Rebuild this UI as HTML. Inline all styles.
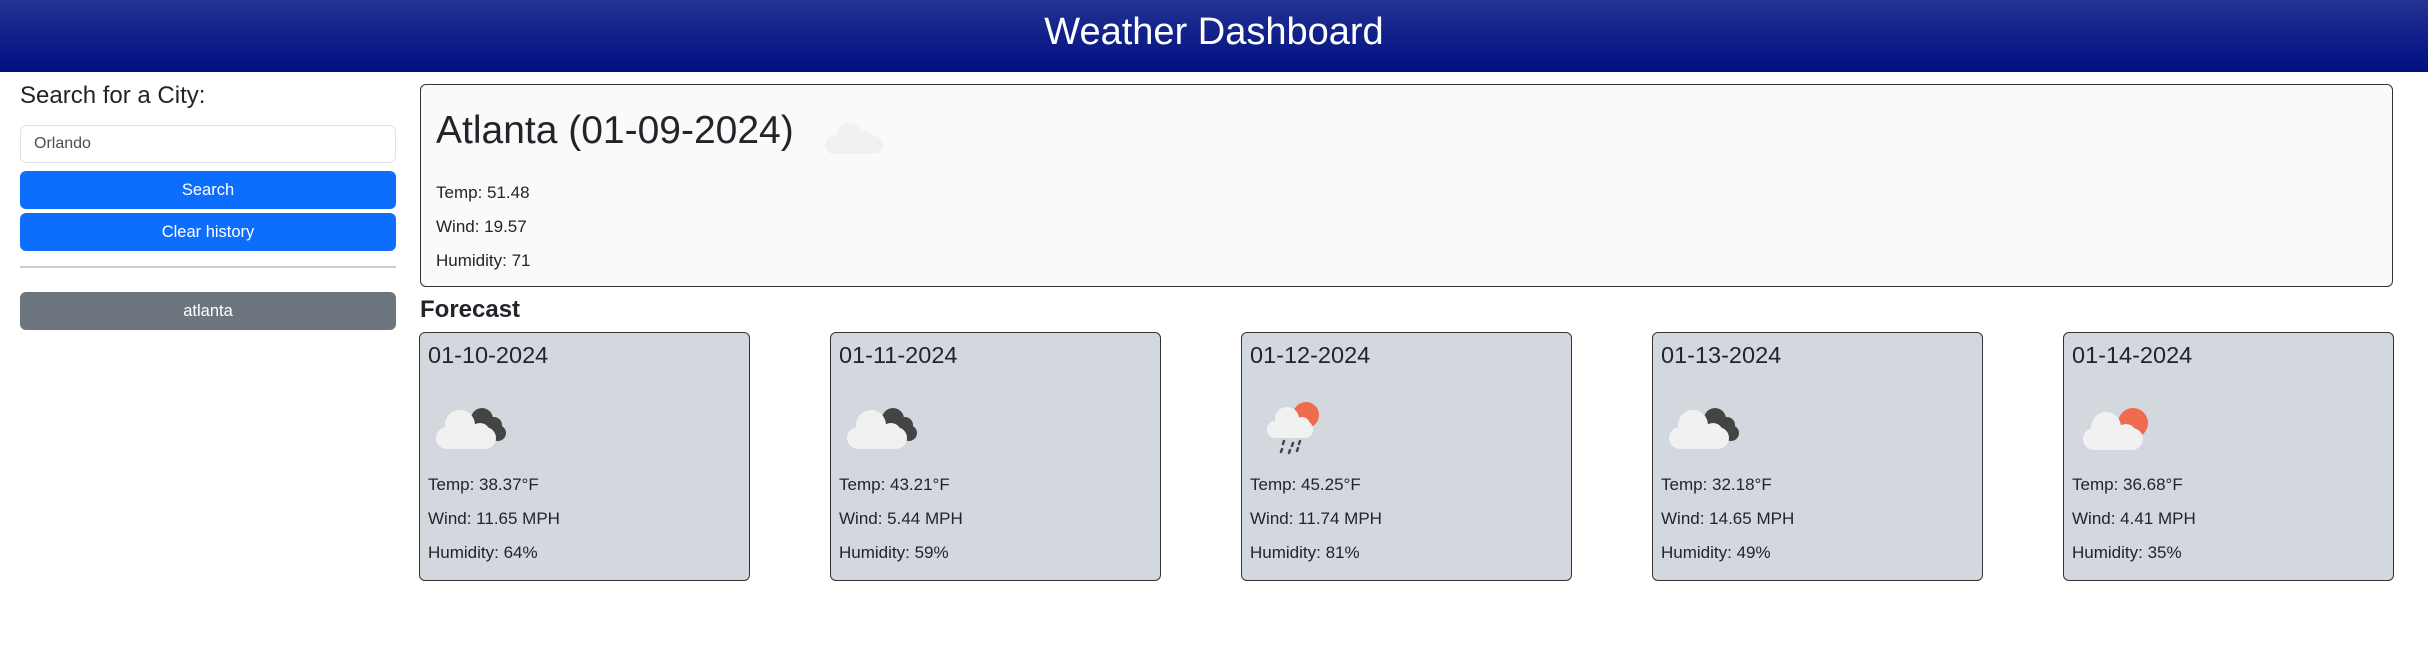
<!DOCTYPE html>
<html><head><meta charset="utf-8"><style>
*{box-sizing:border-box;margin:0;padding:0}
body{width:2428px;height:646px;background:#fff;font-family:"Liberation Sans",Arial,sans-serif;color:#212529;position:relative;overflow:hidden}
.hdr{position:absolute;left:0;top:0;width:2428px;height:72px;background:linear-gradient(#233293,#000f80);color:#fff;font-size:38px;text-align:center;line-height:64px}
.abs{position:absolute}
.lbl{left:20px;top:82px;font-size:24px}
.inp{left:20px;top:125px;width:376px;height:38px;border:1px solid #dee2e6;border-radius:6px;font-size:16px;color:#495057;padding-left:13px;line-height:36px}
.btn{left:20px;width:376px;height:38px;border-radius:6px;background:#0d6efd;color:#fff;font-size:16.5px;text-align:center;line-height:38px}
.hr{left:20px;top:266px;width:376px;height:2px;background:#ccc}
.main{left:420px;top:84px;width:1973px;height:203px;border:1.5px solid #333;border-radius:6px;background:#fafafa}
.main h1{position:absolute;left:15px;top:24px;font-size:39px;font-weight:normal}
.main p{position:absolute;left:15px;font-size:17px}
.fc{left:420px;top:296px;font-size:24px;font-weight:bold}
.card{top:332px;width:331px;height:249px;border:1.5px solid #333;border-radius:6px;background:#d3d8de}
.card .d{position:absolute;left:8px;top:9px;font-size:23.5px}
.card p{position:absolute;left:8px;font-size:17px}
.card svg{position:absolute;left:0;top:0}
</style></head><body>
<div class="hdr">Weather Dashboard</div>
<div class="abs lbl">Search for a City:</div>
<div class="abs inp">Orlando</div>
<div class="abs btn" style="top:171px">Search</div>
<div class="abs btn" style="top:213px">Clear history</div>
<div class="abs hr"></div>
<div class="abs btn" style="top:292px;background:#6c757d">atlanta</div>

<div class="abs main">
<h1>Atlanta (01-09-2024)</h1>
<svg class="abs" style="left:402px;top:31px" width="64" height="42"><g fill="#f1f1f1"><rect x="2" y="20" width="58" height="18" rx="9"/><circle cx="26" cy="20" r="13"/><circle cx="42" cy="24" r="9"/></g></svg>
<p style="top:98px">Temp: 51.48</p>
<p style="top:132px">Wind: 19.57</p>
<p style="top:166px">Humidity: 71</p>
</div>
<div class="abs fc">Forecast</div>

<div class="abs card" style="left:419px"><div class="d">01-10-2024</div>
<svg width="120" height="130"><g fill="#444"><circle cx="62" cy="86" r="11"/><circle cx="74" cy="92" r="8"/><circle cx="78" cy="100" r="8"/></g><g fill="#f1f1f1"><rect x="16" y="94" width="60" height="22" rx="11"/><circle cx="40" cy="92" r="15"/><circle cx="60" cy="100" r="10"/></g></svg>
<p style="top:142px">Temp: 38.37°F</p><p style="top:176px">Wind: 11.65 MPH</p><p style="top:210px">Humidity: 64%</p></div>

<div class="abs card" style="left:830px"><div class="d">01-11-2024</div>
<svg width="120" height="130"><g fill="#444"><circle cx="62" cy="86" r="11"/><circle cx="74" cy="92" r="8"/><circle cx="78" cy="100" r="8"/></g><g fill="#f1f1f1"><rect x="16" y="94" width="60" height="22" rx="11"/><circle cx="40" cy="92" r="15"/><circle cx="60" cy="100" r="10"/></g></svg>
<p style="top:142px">Temp: 43.21°F</p><p style="top:176px">Wind: 5.44 MPH</p><p style="top:210px">Humidity: 59%</p></div>

<div class="abs card" style="left:1241px"><div class="d">01-12-2024</div>
<svg width="120" height="130"><circle cx="64" cy="82" r="13" fill="#ee6c4d"/><g fill="#f1f1f1"><rect x="25" y="88" width="46" height="17" rx="8"/><circle cx="45" cy="86" r="12"/><circle cx="60" cy="92" r="8"/></g><g stroke="#444" stroke-width="2.5" stroke-linecap="round"><path d="M42 108l-1 3M51 110l-1 3M58 108l-1 3M40 116l-1 3M48 117l-1 3M56 115l-1 3"/></g></svg>
<p style="top:142px">Temp: 45.25°F</p><p style="top:176px">Wind: 11.74 MPH</p><p style="top:210px">Humidity: 81%</p></div>

<div class="abs card" style="left:1652px"><div class="d">01-13-2024</div>
<svg width="120" height="130"><g fill="#444"><circle cx="62" cy="86" r="11"/><circle cx="74" cy="92" r="8"/><circle cx="78" cy="100" r="8"/></g><g fill="#f1f1f1"><rect x="16" y="94" width="60" height="22" rx="11"/><circle cx="40" cy="92" r="15"/><circle cx="60" cy="100" r="10"/></g></svg>
<p style="top:142px">Temp: 32.18°F</p><p style="top:176px">Wind: 14.65 MPH</p><p style="top:210px">Humidity: 49%</p></div>

<div class="abs card" style="left:2063px"><div class="d">01-14-2024</div>
<svg width="120" height="130"><circle cx="69" cy="90" r="15" fill="#ee6c4d"/><g fill="#f1f1f1"><rect x="19" y="95" width="60" height="22" rx="11"/><circle cx="42" cy="94" r="15"/><circle cx="62" cy="101" r="10"/></g></svg>
<p style="top:142px">Temp: 36.68°F</p><p style="top:176px">Wind: 4.41 MPH</p><p style="top:210px">Humidity: 35%</p></div>
</body></html>
